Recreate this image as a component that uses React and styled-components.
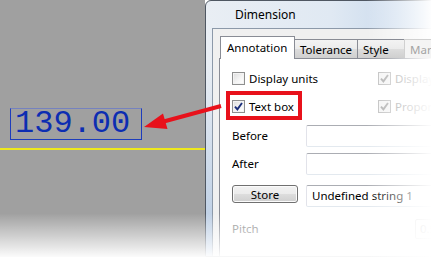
import React from 'react';
import styled, { createGlobalStyle, css } from 'styled-components';

const GlobalStyle = createGlobalStyle`
	html, body {
		margin: 0;
		padding: 0;
		background: #ffffff;
	}
	#root {
		width: 431px;
		height: 257px;
	}
`;

const RED = '#e8111b';

const Check = ({ checked, disabled }) => (
	<CheckBox disabled={disabled}>
		{checked && (
			<svg width="9" height="9" viewBox="0 0 9 9">
				<path
					d="M1 4.6 L3.4 7.4 L8 1"
					fill="none"
					stroke={disabled ? '#a8a8a8' : '#1b2f7a'}
					strokeWidth="1.9"
				/>
			</svg>
		)}
	</CheckBox>
);

const App = () => {
	return (
		<>
			<GlobalStyle />
			<Page>
				<Canvas>
					<DimensionBox>139.00</DimensionBox>
					<Baseline />
				</Canvas>
				<Window>
					<TitleBar>Dimension</TitleBar>
					<Client>
						<TabStrip>
							<Tab active width={75}>Annotation</Tab>
							<Tab width={64}>Tolerance</Tab>
							<Tab width={48}>Style</Tab>
							<Tab disabled width={60}>Markers</Tab>
						</TabStrip>
						<Panel>
							<CheckGrid>
								<CheckItem>
									<Check />
									<span>Display units</span>
								</CheckItem>
								<CheckItem disabled>
									<Check checked disabled />
									<span>Display zeros</span>
								</CheckItem>
								<CheckItem highlighted>
									<Check checked />
									<span>Text box</span>
								</CheckItem>
								<CheckItem disabled>
									<Check checked disabled />
									<span>Proportional</span>
								</CheckItem>
							</CheckGrid>
							<FieldRow gap={6}>
								<FieldLabel>Before</FieldLabel>
								<TextInput />
							</FieldRow>
							<FieldRow gap={10}>
								<FieldLabel>After</FieldLabel>
								<TextInput />
							</FieldRow>
							<FieldRow gap={11}>
								<Button>Store</Button>
								<TextInput>Undefined string 1</TextInput>
							</FieldRow>
							<PitchRow>
								<FieldLabel disabled>Pitch</FieldLabel>
								<SmallInput>0.5</SmallInput>
							</PitchRow>
						</Panel>
					</Client>
				</Window>
				<Callout width="431" height="257" viewBox="0 0 431 257">
					<line x1="221" y1="106" x2="160" y2="122.5" stroke={RED} strokeWidth="4" />
					<polygon points="144,127 167.5,129 163,113.5" fill={RED} />
				</Callout>
				<Fade />
			</Page>
		</>
	);
};

export default App;

const Page = styled.div`
	position: relative;
	display: flex;
	width: 431px;
	height: 257px;
	overflow: hidden;
	font-family: 'Noto Sans', 'Open Sans', sans-serif;
	font-size: 11.5px;
	color: #000;
`;

const Canvas = styled.div`
	flex: 0 0 205px;
	background: #a0a0a0;
	padding-top: 108px;
	box-sizing: border-box;
`;

const DimensionBox = styled.div`
	margin-left: 10px;
	width: 132px;
	height: 32px;
	box-sizing: border-box;
	border: 1px solid #1d3cbc;
	border-top-color: #7582bf;
	padding-left: 4px;
	font-family: 'Liberation Mono', 'Courier New', monospace;
	font-size: 32px;
	line-height: 30px;
	color: #0c2db2;
`;

const Baseline = styled.div`
	margin-top: 8px;
	height: 2px;
	background: #eee81c;
`;

const Window = styled.div`
	flex: 0 0 280px;
	display: flex;
	flex-direction: column;
	overflow: hidden;
	box-sizing: border-box;
	border: 1px solid #4f5762;
	border-radius: 6px 6px 0 0;
	padding: 0 0 0 6px;
	background: linear-gradient(to bottom, rgba(255, 255, 255, 0) 25%, rgba(140, 172, 212, 0.55) 100%),
		linear-gradient(to right, #e9eef4 0%, #e0e9f3 45%, #bdd2ea 85%, #c6d9ee 100%);
`;

const TitleBar = styled.div`
	flex: 0 0 27px;
	display: flex;
	align-items: center;
	padding-left: 23px;
	font-size: 12px;
	color: #000;
`;

const Client = styled.div`
	flex: 1 1 auto;
	min-height: 0;
	display: flex;
	flex-direction: column;
	border: 1px solid #8c99a9;
	border-right: none;
	border-bottom: none;
	background: #f0f0f0;
	padding: 7px 0 0 6px;
`;

const TabStrip = styled.div`
	flex: 0 0 22px;
	display: flex;
	align-items: flex-end;
	padding-left: 1px;
	position: relative;
	z-index: 1;
`;

const Tab = styled.div`
	flex: 0 0 ${(p) => p.width}px;
	box-sizing: border-box;
	height: 19px;
	border: 1px solid #898c95;
	border-bottom: none;
	margin-right: -1px;
	padding-left: 5px;
	display: flex;
	align-items: center;
	white-space: nowrap;
	overflow: hidden;
	background: linear-gradient(to bottom, #f3f3f3 0%, #ebebeb 50%, #dddddd 51%, #cfcfcf 100%);
	color: ${(p) => (p.disabled ? '#a4a4a4' : '#000')};
	${(p) =>
		p.disabled &&
		css`
			background: #f4f4f4;
			border-color: #d0d0d0;
		`}
	${(p) =>
		p.active &&
		css`
			height: 23px;
			margin-bottom: -1px;
			padding-left: 6px;
			padding-bottom: 2px;
			background: #ffffff;
			position: relative;
			z-index: 2;
		`}
`;

const Panel = styled.div`
	flex: 1 1 auto;
	display: flex;
	flex-direction: column;
	border: 1px solid #898c95;
	border-right: none;
	border-bottom: none;
	background: #ffffff;
	padding: 5px 0 0 12px;
`;

const CheckGrid = styled.div`
	display: grid;
	grid-template-columns: 146px 1fr;
	grid-auto-rows: 28px;
	margin-bottom: 5px;
`;

const CheckItem = styled.label`
	position: relative;
	align-self: center;
	justify-self: start;
	display: flex;
	align-items: center;
	gap: 4px;
	height: 16px;
	white-space: nowrap;
	color: ${(p) => (p.disabled ? '#9c9c9c' : '#000')};
	${(p) =>
		p.highlighted &&
		css`
			&::after {
				content: '';
				position: absolute;
				top: -7px;
				bottom: -6px;
				left: -6px;
				right: -8px;
				border: 4px solid ${RED};
			}
		`}
`;

const CheckBox = styled.span`
	width: 13px;
	height: 13px;
	box-sizing: border-box;
	border: 1px solid ${(p) => (p.disabled ? '#bcbcbc' : '#8e8f8f')};
	background: ${(p) =>
		p.disabled
			? '#f4f4f4'
			: 'linear-gradient(135deg, #dcdcdc 0%, #f6f6f6 60%, #ffffff 100%)'};
	box-shadow: inset 0 0 0 1px ${(p) => (p.disabled ? '#f4f4f4' : '#f3f3f3')};
	display: flex;
	align-items: center;
	justify-content: center;
`;

const FieldRow = styled.div`
	flex: 0 0 22px;
	display: grid;
	grid-template-columns: 74px 150px;
	align-items: start;
	margin-bottom: ${(p) => p.gap}px;
`;

const FieldLabel = styled.div`
	line-height: 22px;
	color: ${(p) => (p.disabled ? '#8d8d8d' : '#000')};
`;

const TextInput = styled.div`
	height: 22px;
	box-sizing: border-box;
	border: 1px solid #e2e3ea;
	border-top-color: #abadb3;
	border-bottom-color: #e3e9ef;
	border-radius: 2px;
	background: #fff;
	padding-left: 5px;
	line-height: 20px;
	white-space: nowrap;
	overflow: hidden;
`;

const Button = styled.div`
	width: 66px;
	height: 18px;
	box-sizing: border-box;
	border: 1px solid #707070;
	border-radius: 3px;
	background: linear-gradient(to bottom, #f2f2f2 0%, #ebebeb 50%, #dddddd 51%, #cfcfcf 100%);
	box-shadow: inset 0 0 0 1px #fbfbfb;
	display: flex;
	align-items: center;
	justify-content: center;
`;

const PitchRow = styled.div`
	flex: 0 0 20px;
	display: grid;
	grid-template-columns: 183px 40px;
	align-items: center;
`;

const SmallInput = styled.div`
	height: 20px;
	box-sizing: border-box;
	border: 1px solid #d9d9d9;
	border-radius: 2px;
	padding-left: 4px;
	line-height: 18px;
	color: #a8a8a8;
`;

const Callout = styled.svg`
	position: absolute;
	left: 0;
	top: 0;
	pointer-events: none;
`;

const Fade = styled.div`
	position: absolute;
	inset: 0;
	pointer-events: none;
	background: linear-gradient(to right, rgba(255, 255, 255, 0) 85%, rgba(255, 255, 255, 0.97) 100%),
		linear-gradient(to bottom, rgba(255, 255, 255, 0) 83%, rgba(255, 255, 255, 0.96) 100%);
`;
